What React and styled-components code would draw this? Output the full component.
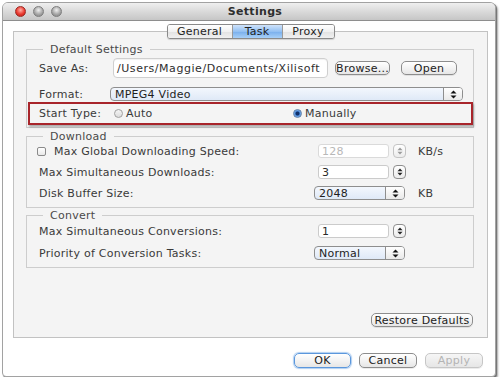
import React from "react";
import styled, { createGlobalStyle } from "styled-components";

const GlobalStyle = createGlobalStyle`
  html, body {
    margin: 0;
    padding: 0;
    background: #fff;
  }
  body {
    font-family: "DejaVu Sans", "Liberation Sans", sans-serif;
    font-size: 11px;
    letter-spacing: 0.25px;
    color: #333;
  }
  * { box-sizing: border-box; }
`;

const Window = styled.div`
  width: 494px;
  height: 375px;
  margin: 2px 0 0 2px;
  border: 1px solid #a2a2a2;
  border-radius: 6px 6px 4px 4px;
  box-shadow: 1px 1px 0 #777, 2px 2px 2px rgba(0, 0, 0, 0.35);
  background: #fff;
  display: flex;
  flex-direction: column;
  overflow: hidden;
`;

const TitleBar = styled.div`
  height: 18px;
  display: grid;
  grid-template-columns: 1fr auto 1fr;
  align-items: center;
  padding-left: 12px;
  background: linear-gradient(#efefef, #d6d6d6 60%, #c6c6c6);
  border-bottom: 1px solid #8e8e8e;
`;

const Lights = styled.div`
  display: flex;
  gap: 7px;
`;

const Light = styled.span`
  width: 11px;
  height: 11px;
  border-radius: 50%;
  border: 1px solid ${(p) => (p.red ? "#9a2a24" : "#7d7d7d")};
  background: ${(p) =>
    p.red
      ? "radial-gradient(circle at 50% 35%, #ffb0a8 0%, #ea3a30 55%, #b81810 100%)"
      : "radial-gradient(circle at 50% 35%, #f0f0f0 0%, #a8a8a8 55%, #7e7e7e 100%)"};
`;

const Title = styled.div`
  font-weight: bold;
  font-size: 11px;
  color: #2e2e2e;
  letter-spacing: 0.3px;
`;

const Body = styled.div`
  flex: 1;
  display: flex;
  flex-direction: column;
  padding: 10px 7px 0 10px;
`;

const TabPanel = styled.div`
  height: 307px;
  border: 1px solid #c2c2c2;
  background: #f4f4f4;
  display: flex;
  flex-direction: column;
`;

const TabBar = styled.div`
  display: flex;
  margin: -8px auto 0;
  height: 15px;
  border: 1px solid #8a8a8a;
  border-radius: 3px;
  overflow: hidden;
  box-shadow: 0 1px 1px rgba(0, 0, 0, 0.15);
`;

const Tab = styled.div`
  width: ${(p) => p.w}px;
  display: flex;
  align-items: center;
  justify-content: center;
  color: #1e1e1e;
  background: ${(p) =>
    p.active
      ? "linear-gradient(#cfe3fb, #93c0f2 50%, #78aeec 51%, #a8d0f8)"
      : "linear-gradient(#ffffff, #f1f1f1 50%, #e2e2e2 51%, #f0f0f0)"};
  & + & {
    border-left: 1px solid #9a9a9a;
  }
`;

const Group = styled.fieldset`
  margin: ${(p) => p.top}px 13px 0 12px;
  padding: 0;
  border: 1px solid #cdcdcd;
  min-width: 0;
`;

const Legend = styled.legend`
  margin-left: 16px;
  padding: 0 7px;
  line-height: 13px;
  color: #4a4a4a;
`;

const GroupInner = styled.div`
  padding: ${(p) => p.pt}px 9px ${(p) => p.pb}px 12px;
  display: flex;
  flex-direction: column;
  gap: ${(p) => p.gap || 0}px;
`;

const Row = styled.div`
  display: flex;
  align-items: center;
  height: ${(p) => p.h}px;
  margin-top: ${(p) => p.mt || 0}px;
`;

const HighlightRow = styled.div`
  display: flex;
  align-items: center;
  height: 23px;
  margin: 1px -9px 0 -11px;
  padding-left: 9px;
  border: 2px solid #a8252b;
  box-shadow: 1px 2px 2px rgba(0, 0, 0, 0.3);
`;

const Label = styled.span`
  width: ${(p) => (p.w ? `${p.w}px` : "auto")};
  flex: ${(p) => (p.w ? "none" : 1)};
  white-space: nowrap;
  color: #3a3a3a;
`;

const PathField = styled.div`
  width: 215px;
  height: 20px;
  border: 1px solid #cfcfcf;
  border-radius: 4px;
  background: #fff;
  box-shadow: inset 0 1px 1px rgba(0, 0, 0, 0.06);
  padding-left: 3px;
  display: flex;
  align-items: center;
  letter-spacing: 0.55px;
  color: #2e2e2e;
  white-space: nowrap;
  overflow: hidden;
`;

const Button = styled.div`
  width: ${(p) => p.w}px;
  height: ${(p) => p.h || 14}px;
  margin-left: ${(p) => p.ml || 0}px;
  border: 1px solid ${(p) => (p.focus ? "#5b97dc" : p.disabled ? "#c6c6c6" : "#8d8d8d")};
  border-radius: 5px;
  background: ${(p) =>
    p.disabled ? "linear-gradient(#f6f6f6, #e6e6e6)" : "linear-gradient(#ffffff, #f3f3f3 50%, #e6e6e6)"};
  box-shadow: ${(p) => (p.focus ? "0 0 1px 1px rgba(110, 165, 230, 0.55)" : "0 1px 0 rgba(0,0,0,0.08)")};
  color: ${(p) => (p.disabled ? "#b4b4b4" : "#222")};
  display: flex;
  align-items: center;
  justify-content: center;
  white-space: nowrap;
  flex: none;
`;

const Popup = styled.div`
  width: ${(p) => p.w}px;
  height: 14px;
  border: 1px solid #8e8e8e;
  border-radius: 4px;
  background: linear-gradient(#f3f7fd, #dfe9f7);
  display: flex;
  align-items: center;
  padding-left: 4px;
  color: #1e1e1e;
  flex: none;
`;

const PopupText = styled.span`
  flex: 1;
`;

const PopupButton = styled.span`
  width: 19px;
  height: 12px;
  border-left: 1px solid #8e8e8e;
  border-radius: 0 3px 3px 0;
  background: linear-gradient(#ffffff, #e9e9e9);
  display: flex;
  align-items: center;
  justify-content: center;
`;

const Control = styled.div`
  width: 92px;
  display: flex;
  align-items: center;
  flex: none;
`;

const NumField = styled.div`
  width: 71px;
  height: 14px;
  margin-left: 4px;
  border: 1px solid ${(p) => (p.disabled ? "#dadada" : "#cbcbcb")};
  border-radius: 3px;
  background: #fff;
  padding-left: 3px;
  display: flex;
  align-items: center;
  color: ${(p) => (p.disabled ? "#b8b8b8" : "#2a2a2a")};
`;

const Stepper = styled.div`
  width: 13px;
  height: 14px;
  margin-left: 4px;
  border: 1px solid ${(p) => (p.disabled ? "#c4c4c4" : "#8e8e8e")};
  border-radius: 4px;
  background: linear-gradient(#ffffff, #ececec);
  display: flex;
  align-items: center;
  justify-content: center;
`;

const Unit = styled.span`
  width: 58px;
  flex: none;
  padding-left: 12px;
  color: #3a3a3a;
`;

const Check = styled.span`
  width: 9px;
  height: 9px;
  margin: 0 8px 0 -2px;
  border: 1px solid #8a8a8a;
  border-radius: 2px;
  background: linear-gradient(#fff, #e8e8e8);
  flex: none;
`;

const RadioOption = styled.span`
  width: ${(p) => (p.w ? `${p.w}px` : "auto")};
  display: flex;
  align-items: center;
  gap: 3px;
  color: #3a3a3a;
`;

const RadioDot = styled.span`
  width: 9px;
  height: 9px;
  border-radius: 50%;
  border: 1px solid ${(p) => (p.on ? "#5d7ea6" : "#a0a0a0")};
  background: ${(p) =>
    p.on
      ? "radial-gradient(circle at 50% 50%, #10306a 0 1.5px, #4f8fe0 2.5px, #b9d6f6 100%)"
      : "linear-gradient(#f4f4f4, #dcdcdc)"};
  flex: none;
`;

const Spacer = styled.div`
  flex: 1;
`;

const RestoreRow = styled.div`
  display: flex;
  justify-content: flex-end;
  padding: 0 14px 10px 0;
`;

const Footer = styled.div`
  display: flex;
  justify-content: flex-end;
  gap: 8px;
  margin-top: 15px;
  padding-right: 5px;
`;

const Arrows = ({ color = "#111", w = 7, h = 9 }) => (
  <svg width={w} height={h} viewBox="0 0 7 9">
    <path d="M3.5 0.5 L6.5 3.6 L0.5 3.6 Z" fill={color} />
    <path d="M3.5 8.5 L6.5 5.4 L0.5 5.4 Z" fill={color} />
  </svg>
);

const Spin = ({ value, disabled }) => (
  <Control>
    <NumField disabled={disabled}>{value}</NumField>
    <Stepper disabled={disabled}>
      <Arrows w={6} h={8} color={disabled ? "#9a9a9a" : "#222"} />
    </Stepper>
  </Control>
);

const Select = ({ value, w }) => (
  <Popup w={w}>
    <PopupText>{value}</PopupText>
    <PopupButton>
      <Arrows />
    </PopupButton>
  </Popup>
);

export default function App() {
  return (
    <>
      <GlobalStyle />
      <Window>
        <TitleBar>
          <Lights>
            <Light red />
            <Light />
            <Light />
          </Lights>
          <Title>Settings</Title>
          <span />
        </TitleBar>
        <Body>
          <TabPanel>
            <TabBar>
              <Tab w={64}>General</Tab>
              <Tab w={50} active>
                Task
              </Tab>
              <Tab w={52}>Proxy</Tab>
            </TabBar>

            <Group top={4}>
              <Legend>Default Settings</Legend>
              <GroupInner pt={2} pb={2}>
                <Row h={20}>
                  <Label w={74}>Save As:</Label>
                  <PathField>/Users/Maggie/Documents/Xilisoft</PathField>
                  <Button w={55} ml={7}>
                    Browse...
                  </Button>
                  <Button w={56} ml={11}>
                    Open
                  </Button>
                </Row>
                <Row h={14} mt={9}>
                  <Label w={71}>Format:</Label>
                  <Select w={353} value="MPEG4 Video" />
                </Row>
                <HighlightRow>
                  <Label w={75}>Start Type:</Label>
                  <RadioOption w={179}>
                    <RadioDot />
                    Auto
                  </RadioOption>
                  <RadioOption>
                    <RadioDot on />
                    Manually
                  </RadioOption>
                </HighlightRow>
              </GroupInner>
            </Group>

            <Group top={2}>
              <Legend>Download</Legend>
              <GroupInner pt={1} pb={7} gap={7}>
                <Row h={14}>
                  <Check />
                  <Label>Max Global Downloading Speed:</Label>
                  <Spin value="128" disabled />
                  <Unit>KB/s</Unit>
                </Row>
                <Row h={14}>
                  <Label>Max Simultaneous Downloads:</Label>
                  <Spin value="3" />
                  <Unit />
                </Row>
                <Row h={14}>
                  <Label>Disk Buffer Size:</Label>
                  <Control>
                    <Select w={91} value="2048" />
                  </Control>
                  <Unit>KB</Unit>
                </Row>
              </GroupInner>
            </Group>

            <Group top={1}>
              <Legend>Convert</Legend>
              <GroupInner pt={2} pb={7} gap={8}>
                <Row h={14}>
                  <Label>Max Simultaneous Conversions:</Label>
                  <Spin value="1" />
                  <Unit />
                </Row>
                <Row h={14}>
                  <Label>Priority of Conversion Tasks:</Label>
                  <Control>
                    <Select w={91} value="Normal" />
                  </Control>
                  <Unit />
                </Row>
              </GroupInner>
            </Group>

            <Spacer />
            <RestoreRow>
              <Button w={102}>Restore Defaults</Button>
            </RestoreRow>
          </TabPanel>

          <Footer>
            <Button w={57} h={15} focus>
              OK
            </Button>
            <Button w={58} h={15}>
              Cancel
            </Button>
            <Button w={58} h={15} disabled>
              Apply
            </Button>
          </Footer>
        </Body>
      </Window>
    </>
  );
}
